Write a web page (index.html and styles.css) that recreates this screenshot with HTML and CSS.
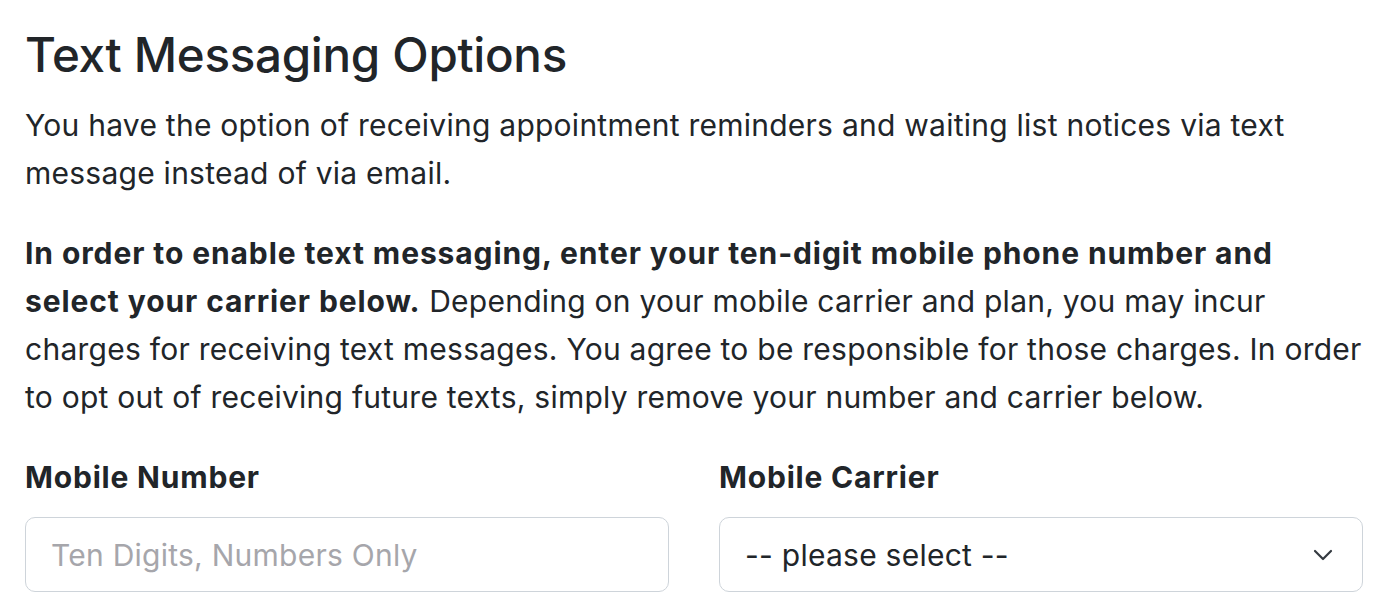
FILE: index.html
```html
<!DOCTYPE html>
<html>
<head>
    <meta charset="utf-8">
    <title>Text Messaging Options</title>
    <link rel="stylesheet" href="styles.css">
</head>
<body>
    <div class="container">
        <h3 class="title">Text Messaging Options</h3>
        <p>You have the option of receiving appointment reminders and waiting list notices via text message instead of via email.</p>
        <p><strong>In order to enable text messaging, enter your ten-digit mobile phone number and select your carrier below.</strong> Depending on your mobile carrier and plan, you may incur charges for receiving text messages. You agree to be responsible for those charges. In order to opt out of receiving future texts, simply remove your number and carrier below.</p>

        <div class="form-row">
            <div class="form-group">
                <label class="form-label" for="mobileNumber">Mobile Number</label>
                <input type="text" id="mobileNumber" class="form-control" placeholder="Ten Digits, Numbers Only">
            </div>
            <div class="form-group">
                <label class="form-label" for="mobileCarrier">Mobile Carrier</label>
                <div class="select-wrap">
                    <select id="mobileCarrier" class="form-select">
                        <option>-- please select --</option>
                    </select>
                    <svg class="select-arrow" width="32" height="24" viewBox="0 0 16 12" fill="none">
                        <path d="M4 4l4 4 4-4" stroke="#343a40" stroke-width="1.1" stroke-linecap="round" stroke-linejoin="round"/>
                    </svg>
                </div>
            </div>
        </div>
    </div>
</body>
</html>
```

FILE: styles.css
```css
body {
    margin: 0;
    font-family: Inter, "Noto Sans", sans-serif;
    color: #212529;
    background: #fff;
}

.container {
    padding: 25px 29px 25px 25px;
}

.title {
    margin: 0 0 16px;
    font-size: 47.5px;
    font-weight: 500;
    line-height: 60px;
    letter-spacing: -0.3px;
}

p {
    margin: 0 0 32px;
    font-size: 30px;
    line-height: 48px;
    letter-spacing: 0.25px;
}

strong {
    font-weight: 700;
    letter-spacing: 0.9px;
}

.form-row {
    display: grid;
    grid-template-columns: 1fr 1fr;
    gap: 50px;
}

.form-label {
    display: block;
    margin-bottom: 16px;
    font-size: 30px;
    font-weight: 700;
    line-height: 48px;
    letter-spacing: 0.8px;
}

.form-control,
.form-select {
    display: block;
    width: 100%;
    box-sizing: border-box;
    height: 75px;
    padding: 12px 25px;
    font-family: inherit;
    font-size: 30px;
    letter-spacing: 0.25px;
    color: #212529;
    background: #fff;
    border: 1px solid #ced4da;
    border-radius: 10px;
    outline: none;
}

.form-control::placeholder {
    color: #a6a6ab;
}

.select-wrap {
    position: relative;
}

.form-select {
    appearance: none;
    -webkit-appearance: none;
    padding-right: 72px;
}

.select-arrow {
    position: absolute;
    right: 24px;
    top: 50%;
    transform: translateY(-50%);
    pointer-events: none;
}
```
